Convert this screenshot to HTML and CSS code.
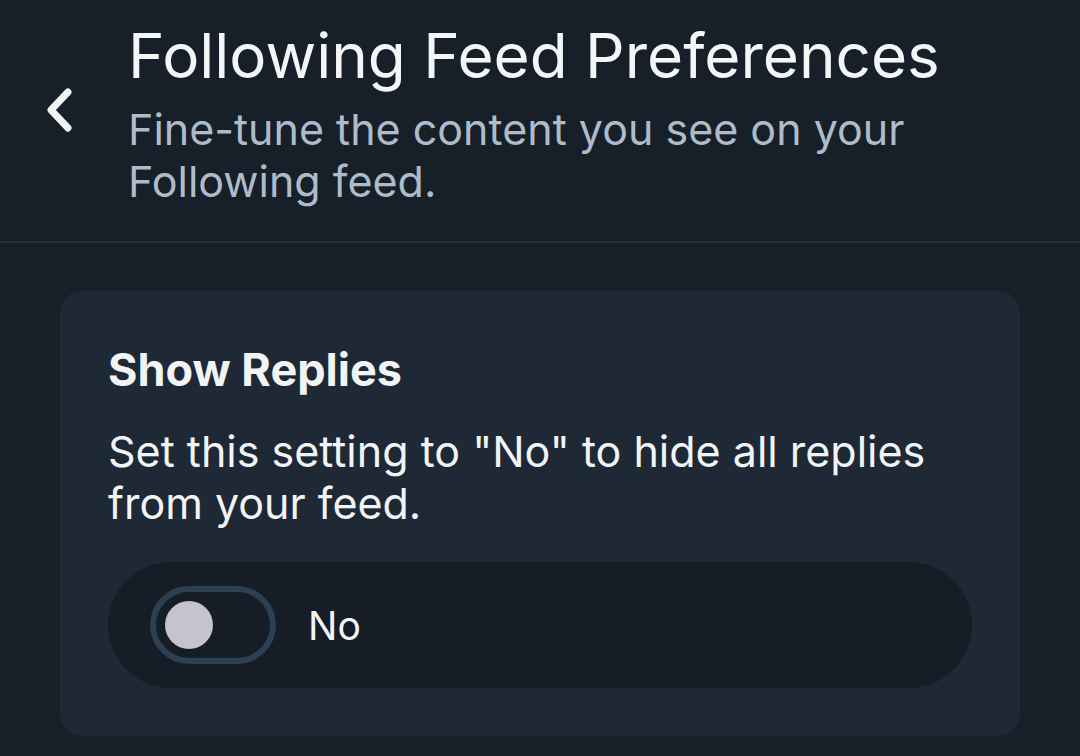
FILE: index.html
```html
<!DOCTYPE html>
<html>
<head>
<meta charset="utf-8">
<link rel="stylesheet" href="styles.css">
</head>
<body>
<header class="header">
  <div class="back">
    <svg width="30" height="46" viewBox="0 0 30 46"><path d="M22 5 L5 23 L22 41" fill="none" stroke="#f1f3f5" stroke-width="7" stroke-linecap="round" stroke-linejoin="round"/></svg>
  </div>
  <div class="header-text">
    <h1 class="title">Following Feed Preferences</h1>
    <p class="subtitle">Fine-tune the content you see on your Following feed.</p>
  </div>
</header>
<main class="content">
  <section class="card">
    <h2 class="card-title">Show Replies</h2>
    <p class="card-desc">Set this setting to "No" to hide all replies from your feed.</p>
    <div class="toggle-row">
      <div class="toggle"><div class="knob"></div></div>
      <span class="toggle-label">No</span>
    </div>
  </section>
</main>
</body>
</html>
```
FILE: styles.css
```css
* { box-sizing: border-box; }
html, body { margin: 0; padding: 0; }
body {
  background: #171f29;
  font-family: Inter, Roboto, "Noto Sans", sans-serif;
  color: #f1f3f5;
  width: 1080px;
  height: 756px;
  overflow: hidden;
}
.header {
  display: flex;
  align-items: center;
  padding: 21px 40px 34px 0;
  border-bottom: 2px solid #253140;
}
.back {
  width: 128px;
  display: flex;
  justify-content: flex-start;
  padding-left: 46px;
  margin-top: -8px;
}
.back svg { display: block; }
.header-text { flex: 1; }
.title {
  margin: 0;
  font-size: 62px;
  line-height: 70px;
  font-weight: 400;
  color: #f3f5f7;
}
.subtitle {
  margin: 12px 0 0;
  font-size: 43px;
  line-height: 52px;
  color: #aebbc9;
}
.content { padding: 48px 60px 0; }
.card {
  background: #1e2935;
  border-radius: 22px;
  padding: 54px 48px 48px;
}
.card-title {
  margin: 0;
  font-size: 45px;
  line-height: 50px;
  font-weight: 700;
  color: #f1f3f5;
}
.card-desc {
  margin: 30px 0 0;
  font-size: 43px;
  line-height: 52px;
  color: #f1f3f5;
}
.toggle-row {
  margin-top: 33px;
  height: 126px;
  border-radius: 63px;
  background: #161d26;
  display: flex;
  align-items: center;
  padding-left: 42px;
  gap: 32px;
}
.toggle {
  width: 126px;
  height: 78px;
  border: 6px solid #2d3f52;
  border-radius: 39px;
  display: flex;
  align-items: center;
  padding-left: 9px;
}
.knob {
  width: 48px;
  height: 48px;
  border-radius: 50%;
  background: #c5c4cc;
}
.toggle-label {
  font-size: 39px;
  color: #f1f3f5;
}
```
